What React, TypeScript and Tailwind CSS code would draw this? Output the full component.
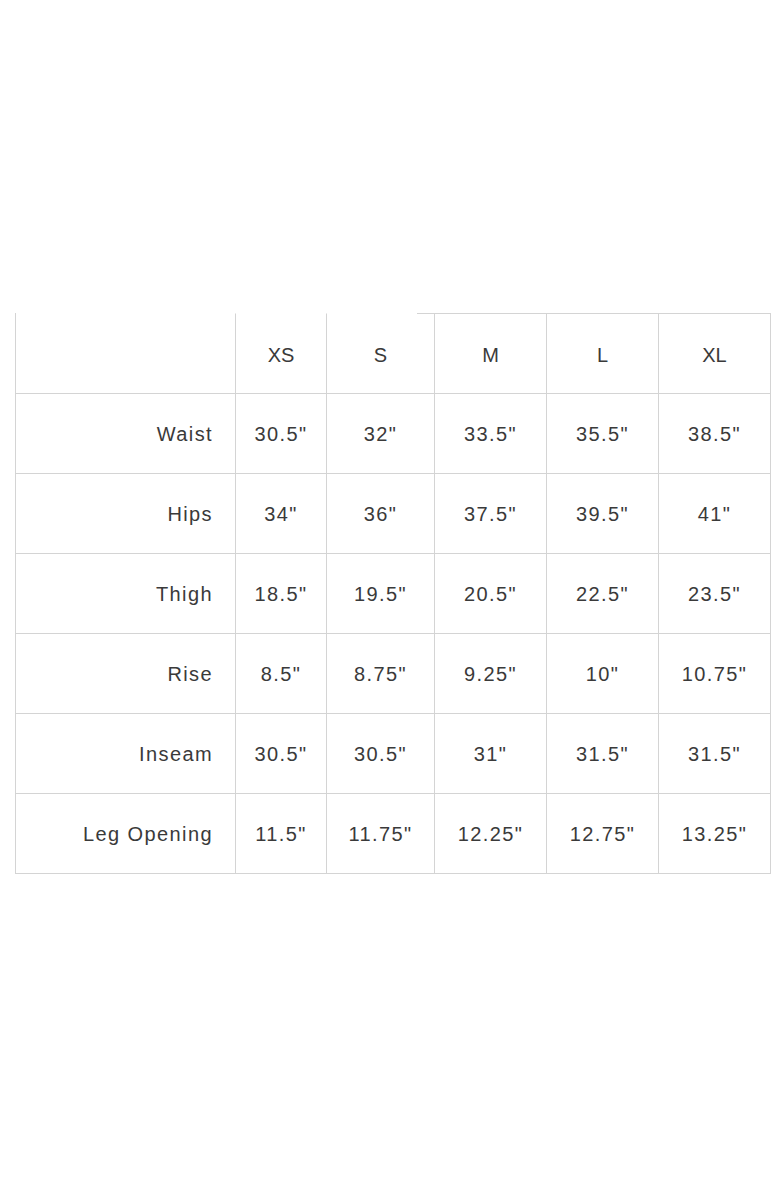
const sizes = ["XS", "S", "M", "L", "XL"];

const rows = [
  { label: "Waist", values: ['30.5"', '32"', '33.5"', '35.5"', '38.5"'] },
  { label: "Hips", values: ['34"', '36"', '37.5"', '39.5"', '41"'] },
  { label: "Thigh", values: ['18.5"', '19.5"', '20.5"', '22.5"', '23.5"'] },
  { label: "Rise", values: ['8.5"', '8.75"', '9.25"', '10"', '10.75"'] },
  { label: "Inseam", values: ['30.5"', '30.5"', '31"', '31.5"', '31.5"'] },
  { label: "Leg Opening", values: ['11.5"', '11.75"', '12.25"', '12.75"', '13.25"'] },
];

const App = () => {
  return (
    <div className="min-h-[1196px] w-[780px] bg-white pt-[313px] font-['Liberation_Sans',Arial,sans-serif] text-[20px] text-[#3a3a3a]">
      <div className="ml-[15px] grid w-[756px] grid-cols-[220px_91px_108px_112px_112px_112px] border-l border-[#d4d4d4]">
        {/* Header row */}
        <div className="h-[81px] border-t border-r border-b border-t-white border-[#d4d4d4]" />
        {sizes.map((size, i) => (
          <div
            key={size}
            className={
              i < 2
                ? "relative flex h-[81px] items-center justify-center border-t border-r border-b border-t-white border-[#d4d4d4] pt-[2px]"
                : "flex h-[81px] items-center justify-center border-t border-r border-b border-[#d4d4d4] pt-[2px]"
            }
          >
            {i === 1 && (
              <span className="absolute -top-px right-[-1px] w-[18px] border-t border-[#d4d4d4]" />
            )}
            {size}
          </div>
        ))}

        {/* Measurement rows */}
        {rows.map((row) => (
          <div key={row.label} className="contents tracking-[1.4px]">
            <div className="flex h-[80px] items-center justify-end border-r border-b border-[#d4d4d4] pr-[22px] tracking-[1.4px]">
              {row.label}
            </div>
            {row.values.map((value, i) => (
              <div
                key={i}
                className="flex h-[80px] items-center justify-center border-r border-b border-[#d4d4d4] tracking-[1.4px]"
              >
                {value}
              </div>
            ))}
          </div>
        ))}
      </div>
    </div>
  );
};

export default App;
